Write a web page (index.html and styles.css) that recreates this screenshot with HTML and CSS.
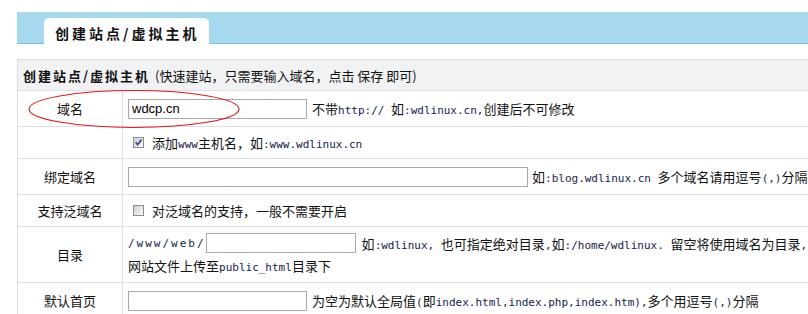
FILE: index.html
```html
<!DOCTYPE html>
<html lang="zh-CN">
<head>
<meta charset="utf-8">
<title>创建站点/虚拟主机</title>
<link rel="stylesheet" href="styles.css">
</head>
<body>
<div class="page">
  <div class="topbar">
    <div class="tab">创建站点/虚拟主机</div>
  </div>

  <div class="form">
    <div class="caption"><b class="cap-title">创建站点/虚拟主机</b>(快速建站，只需要输入域名，点击 保存 即可)</div>

    <div class="label">域名</div>
    <div class="value">
      <input class="field w179" type="text" value="wdcp.cn">
      <span class="note">不带<span class="en">http:// </span>如<span class="en">:wdlinux.cn,</span>创建后不可修改</span>
    </div>

    <div class="label"></div>
    <div class="value">
      <span class="cb"><svg width="9" height="9" viewBox="0 0 9 9"><path d="M1.6 4.2 L3.6 6.6 L7.6 1.6" fill="none" stroke="#3c4a9e" stroke-width="1.7"/></svg></span>
      <span>添加<span class="en">www</span>主机名，如<span class="en">:www.wdlinux.cn</span></span>
    </div>

    <div class="label">绑定域名</div>
    <div class="value">
      <input class="field w400" type="text" value="">
      <span class="note n4">如<span class="en">:blog.wdlinux.cn </span>多个域名请用逗号<span class="en">(,)</span>分隔</span>
    </div>

    <div class="label">支持泛域名</div>
    <div class="value">
      <span class="cb"></span>
      <span>对泛域名的支持，一般不需要开启</span>
    </div>

    <div class="label">目录</div>
    <div class="value stack">
      <div class="line">
        <span class="en path">/www/web/</span><input class="field w150" type="text" value="">
        <span class="note n6">如<span class="en">:wdlinux, </span>也可指定绝对目录<span class="en">,</span>如<span class="en">:/home/wdlinux. </span>留空将使用域名为目录<span class="en">,</span></span>
      </div>
      <div class="line2">网站文件上传至<span class="en">public_html</span>目录下</div>
    </div>

    <div class="label">默认首页</div>
    <div class="value">
      <input class="field w179" type="text" value="">
      <span class="note">为空为默认全局值<span class="en">(</span>即<span class="en">index.html,index.php,index.htm),</span>多个用逗号<span class="en">(,)</span>分隔</span>
    </div>
  </div>

  <svg class="ring" width="808" height="314" viewBox="0 0 808 314">
    <ellipse cx="134" cy="109" rx="105" ry="18.5" fill="none" stroke="#e3141b" stroke-width="1.1"/>
  </svg>
</div>
</body>
</html>
```

FILE: styles.css
```css
* { box-sizing: border-box; }

html, body {
  margin: 0;
  padding: 0;
}

body {
  width: 808px;
  height: 314px;
  overflow: hidden;
  background: #fff;
  font-family: "Noto Sans CJK SC", "Noto Sans CJK JP", sans-serif;
  font-size: 13px;
  color: #111;
}

.page {
  position: relative;
  padding-top: 12px;
}

/* top tab strip */
.topbar {
  margin-left: 17px;
  height: 32px;
  background: #a6d8ee;
  border-bottom: 1px solid #74bde3;
  display: flex;
  align-items: flex-end;
}

.tab {
  margin-left: 27px;
  margin-bottom: -1px;
  width: 165px;
  height: 26px;
  background: #fff;
  border-radius: 5px 5px 0 0;
  padding: 4px 0 0 11px;
  font-size: 14px;
  font-weight: bold;
  line-height: 22px;
  letter-spacing: 3px;
  color: #111;
}

/* form table */
.form {
  margin: 15px 0 0 17px;
  width: 830px;
  border-top: 1px solid #dcdde3;
  border-left: 1px solid #dcdde3;
  display: grid;
  grid-template-columns: 105px 1fr;
  grid-template-rows: 31px 36px 32px 36px 32px 56px 36px;
}

.caption {
  grid-column: 1 / -1;
  background: #f1f2f4;
  border-bottom: 1px solid #dfe0e6;
  display: flex;
  align-items: center;
  padding-left: 5px;
  white-space: nowrap;
}

.cap-title {
  font-weight: bold;
  letter-spacing: 2px;
  margin-right: 5px;
}

.label {
  border-right: 1px solid #dfe0e6;
  border-bottom: 1px solid #dfe0e6;
  display: flex;
  align-items: center;
  justify-content: center;
}

.value {
  border-bottom: 1px solid #dfe0e6;
  display: flex;
  align-items: center;
  padding-left: 5px;
  white-space: nowrap;
}

.value.stack {
  flex-direction: column;
  align-items: flex-start;
  justify-content: center;
}

.line {
  display: flex;
  align-items: center;
  height: 22px;
}

.line2 {
  margin-top: 3px;
  line-height: 18px;
}

.field {
  height: 20px;
  margin: 0;
  padding: 0 3px;
  border: 1px solid #a9a9ab;
  border-radius: 0;
  background: #fff;
  font-family: "Liberation Sans", Arial, sans-serif;
  font-size: 13px;
  color: #000;
  outline: none;
  flex: none;
}

.w179 { width: 179px; }
.w400 { width: 400px; }
.w150 { width: 150px; }

.note { margin-left: 5px; }
.note.n4 { margin-left: 4px; }
.note.n6 { margin-left: 6px; }

.en {
  font-family: "DejaVu Sans Mono", "Liberation Mono", monospace;
  font-size: 11px;
  color: #16224f;
  white-space: pre;
}

.path {
  letter-spacing: 2px;
}

.cb {
  flex: none;
  width: 11px;
  height: 11px;
  margin: 0 8px 0 5px;
  border: 1px solid #8d8d8d;
  background: linear-gradient(135deg, #cfcfcf, #fbfbfb);
  display: flex;
  align-items: center;
  justify-content: center;
}

.cb svg { display: block; }

.ring {
  position: absolute;
  left: 0;
  top: 0;
  pointer-events: none;
}
```
